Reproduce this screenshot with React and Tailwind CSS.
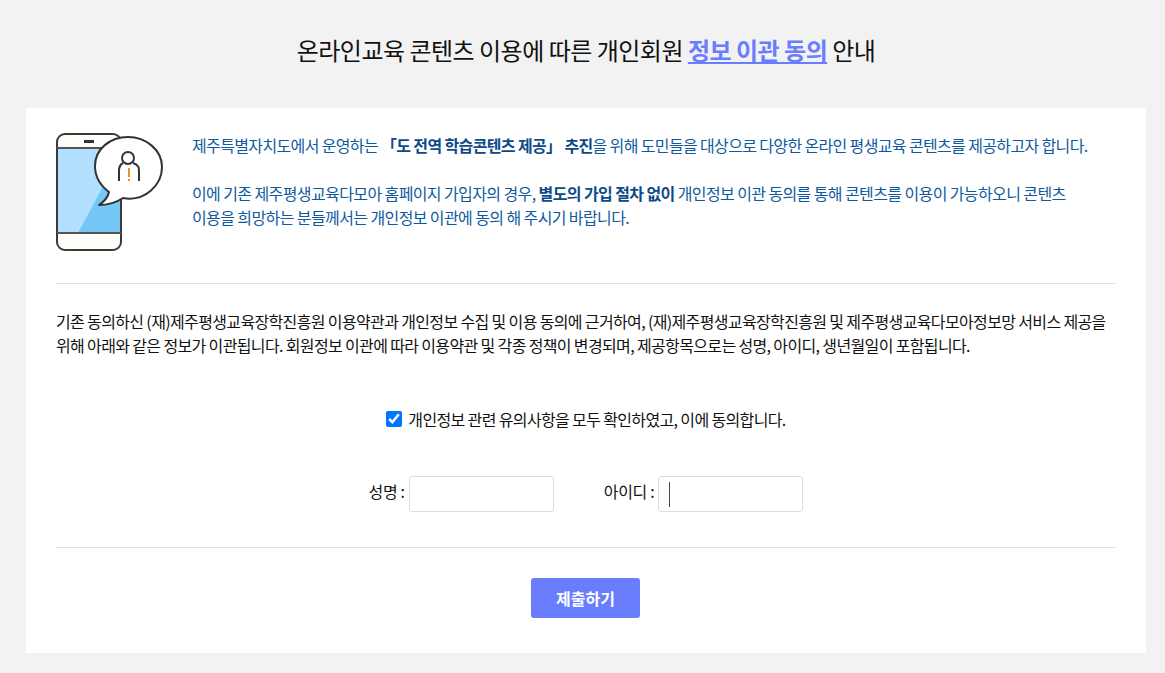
import React from 'react';

const PhoneIcon = () => (
  <svg width="108" height="120" viewBox="0 0 108 120" fill="none" className="shrink-0">
    <rect x="1" y="1" width="64" height="116" rx="8" fill="#fefdfa" />
    <rect x="2" y="15" width="63" height="85" fill="#b3e0ff" />
    <path d="M22 100 L65 20 V100 Z" fill="#75c7f7" />
    <rect x="1" y="1" width="64" height="116" rx="8" stroke="#3a3a3a" strokeWidth="2" />
    <path d="M1 15 H65 M1 100 H65" stroke="#555" strokeWidth="2" />
    <rect x="28" y="7" width="10" height="3" fill="#333" />
    <path
      d="M72 4 C54 4 39 16 39 33 C39 44 45 53 53 59 C52 64 49 68 43 72 C53 72 61 69 67 65 C89 69 106 52 106 34 C106 17 90 4 72 4 Z"
      fill="#fff"
      stroke="#333"
      strokeWidth="2"
      strokeLinejoin="round"
    />
    <circle cx="72" cy="25" r="6" stroke="#333" strokeWidth="2" />
    <path d="M67 30 C63 32 63 35 63 38 V48 M77 30 C83 32 83 35 83 38 V48" stroke="#333" strokeWidth="2" />
    <path d="M73 35 V44 M73 46 V48" stroke="#e8912d" strokeWidth="2" />
  </svg>
);

export default function App() {
  return (
    <div className="min-h-[673px] bg-[#f2f2f2] pl-[26px] pr-[19px] pb-5 font-['Noto_Sans_CJK_KR','Noto_Sans',sans-serif] text-[#111]">
      <h1 className="flex h-[108px] items-start justify-center pt-[32px] text-[24px] leading-[36px] font-normal tracking-[-0.5px]">
        <span>
          온라인교육 콘텐츠 이용에 따른 개인회원{' '}
          <span className="font-bold text-[#6a7dfc] underline">정보 이관 동의</span> 안내
        </span>
      </h1>

      <main className="h-[545px] bg-white px-[30px] pt-[25px]">
        <section className="flex h-[151px] border-b border-[#e0e0e0]">
          <PhoneIcon />
          <div className="ml-7 break-keep text-[16px] leading-[24px] tracking-[-0.64px] text-[#0f5a9e]">
            <p className="mt-0">
              제주특별자치도에서 운영하는 <strong className="font-bold text-[#0d4a8a]">「도 전역 학습콘텐츠 제공」 추진</strong>을 위해 도민들을 대상으로 다양한 온라인 평생교육 콘텐츠를 제공하고자 합니다.
            </p>
            <p className="mt-[24px] w-[890px] tracking-[-0.6px]">
              이에 기존 제주평생교육다모아 홈페이지 가입자의 경우, <strong className="font-bold text-[#0d4a8a]">별도의 가입 절차 없이</strong> 개인정보 이관 동의를 통해 콘텐츠를 이용이 가능하오니 콘텐츠 이용을 희망하는 분들께서는 개인정보 이관에 동의 해 주시기 바랍니다.
            </p>
          </div>
        </section>

        <p className="mt-[25px] break-keep text-[16px] leading-[24px] tracking-[-0.64px] text-[#111]">
          기존 동의하신 (재)제주평생교육장학진흥원 이용약관과 개인정보 수집 및 이용 동의에 근거하여, (재)제주평생교육장학진흥원 및 제주평생교육다모아정보망 서비스 제공을 위해 아래와 같은 정보가 이관됩니다. 회원정보 이관에 따라 이용약관 및 각종 정책이 변경되며, 제공항목으로는 성명, 아이디, 생년월일이 포함됩니다.
        </p>

        <label className="mt-[50px] flex items-center justify-center text-[16px] leading-[24px] tracking-[-0.64px]">
          <input type="checkbox" defaultChecked className="mr-[6px] h-4 w-4 accent-[#0075ff]" />
          개인정보 관련 유의사항을 모두 확인하였고, 이에 동의합니다.
        </label>

        <div className="mt-[45px] flex h-9 items-center justify-center text-[16px] tracking-[-0.3px]">
          <span className="mr-1 pb-[7px]">성명 :</span>
          <input className="h-9 w-[145px] rounded-[3px] border border-[#ddd] bg-white px-2" />
          <span className="ml-[50px] mr-1 pb-[7px]">아이디 :</span>
          <div className="flex h-9 w-[145px] items-center rounded-[3px] border border-[#ddd] bg-white pl-[10px]">
            <span className="h-[25px] w-px bg-[#444]" />
          </div>
        </div>

        <div className="mt-[35px] border-t border-[#e0e0e0] pt-[30px] pr-px text-center">
          <button className="h-10 w-[109px] rounded-[3px] bg-[#6a7dfc] text-[16px] font-bold text-white">
            제출하기
          </button>
        </div>
      </main>
    </div>
  );
}
